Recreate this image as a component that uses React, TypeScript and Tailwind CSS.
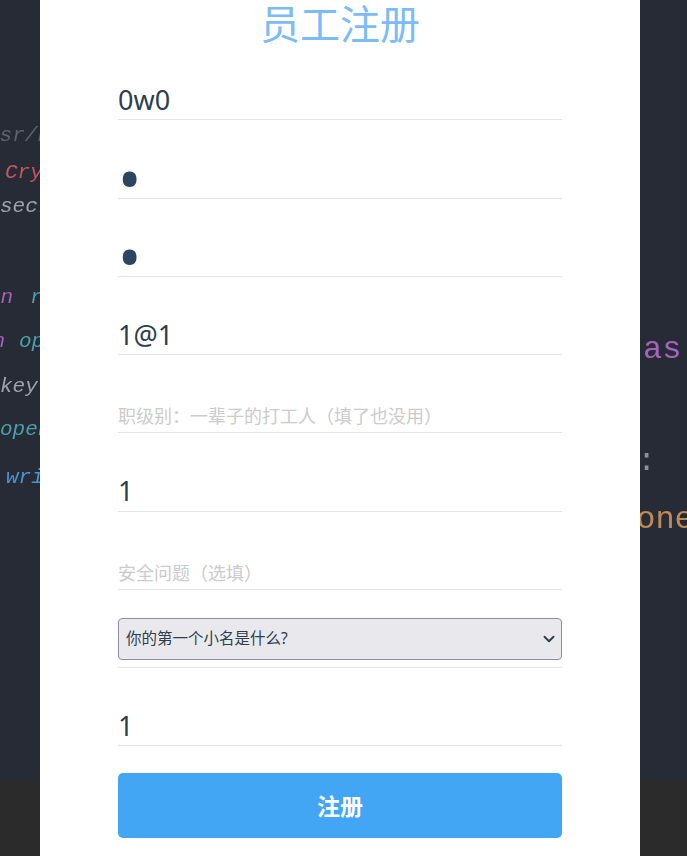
import React from "react";
import { ChevronDown } from "lucide-react";

// code snippets peeking out of the blurred editor backdrop
const snippets: { top: number; left: number; text: string; cls: string }[] = [
  { top: 125, left: -13, text: "usr/bin/env python3", cls: "italic text-[#5d626d]" },
  { top: 162, left: 5, text: "Crypto.Cipher import AES", cls: "italic text-[#c2585f]" },
  { top: 196, left: 0, text: "secret_key = ", cls: "italic text-[#9ea3ab]" },
  { top: 287, left: -12, text: "in", cls: "italic text-[#a35fba]" },
  { top: 287, left: 30, text: "range(16):", cls: "italic text-[#4a9fa9]" },
  { top: 331, left: -20, text: "in", cls: "italic text-[#a35fba]" },
  { top: 331, left: 19, text: "open(path)", cls: "italic text-[#4a9fa9]" },
  { top: 376, left: 0, text: "key = f.read()", cls: "italic text-[#9ea3ab]" },
  { top: 419, left: 0, text: "open(out, 'wb')", cls: "italic text-[#4a9fa9]" },
  { top: 467, left: 6, text: "write(data)", cls: "italic text-[#4b93d2]" },
];

const rightSnippets: { top: number; left: number; text: string; cls: string }[] = [
  { top: 333, left: 643, text: "as", cls: "text-[#a862bd]" },
  { top: 445, left: 637, text: ":", cls: "text-[#8b9099]" },
  { top: 503, left: 617, text: "None", cls: "text-[#c08955]" },
];

function Row({ children, select }: { children: React.ReactNode; select?: boolean }) {
  return (
    <div
      className={`h-[78.25px] border-b border-[#e4e4e4] flex items-end ${select ? "pb-[7px]" : ""}`}
    >
      {children}
    </div>
  );
}

const inputCls =
  "w-full h-[38px] outline-none bg-transparent text-[27px] text-[#2c3e50] placeholder:text-[#cbcbcb] placeholder:text-[18px]";

const pwdCls = "w-full h-[38px] outline-none bg-transparent text-[62px] text-[#2c4660]";

export default function App() {
  return (
    <div
      className="relative h-[856px] overflow-hidden bg-[#272b35]"
      style={{ fontFamily: '"Noto Sans", "Noto Sans CJK SC", sans-serif' }}
    >
      {/* backdrop */}
      <div className="absolute inset-0 flex flex-col">
        <div className="h-[780px] bg-[#272b35]" />
        <div className="flex-1 bg-[#2b2b2b]" />
      </div>
      <div className="absolute inset-0 blur-[0.6px]" style={{ fontFamily: '"Liberation Mono", monospace' }}>
        {snippets.map((s, i) => (
          <div
            key={i}
            className={`absolute whitespace-nowrap text-[21px] leading-[22px] ${s.cls}`}
            style={{ top: s.top, left: s.left }}
          >
            {s.text}
          </div>
        ))}
        {rightSnippets.map((s, i) => (
          <div
            key={i}
            className={`absolute whitespace-nowrap text-[32px] leading-[34px] ${s.cls}`}
            style={{ top: s.top, left: s.left }}
          >
            {s.text}
          </div>
        ))}
      </div>

      {/* panel */}
      <div className="relative ml-[40px] w-[600px] h-full bg-white">
        <div className="w-[444px] mx-auto">
          <h1 className="h-[42px] pt-[4px] text-center text-[40px] leading-[40px] text-[#7bbcf8]">
            员工注册
          </h1>
          <form onSubmit={(e) => e.preventDefault()}>
            <Row>
              <input className={inputCls} defaultValue="0w0" />
            </Row>
            <Row>
              <input type="password" className={pwdCls} defaultValue="1" />
            </Row>
            <Row>
              <input type="password" className={pwdCls} defaultValue="1" />
            </Row>
            <Row>
              <input className={inputCls} defaultValue="1@1" />
            </Row>
            <Row>
              <input className={inputCls} placeholder="职级别：一辈子的打工人（填了也没用）" />
            </Row>
            <Row>
              <input className={inputCls} defaultValue="1" />
            </Row>
            <Row>
              <input className={inputCls} placeholder="安全问题（选填）" />
            </Row>
            <Row select>
              <div className="relative w-full">
                <select className="w-full h-[42px] appearance-none rounded-[4px] border border-[#8f8f9d] bg-[#e9e9ed] pl-[7px] text-[15.5px] text-[#2c3e50] outline-none">
                  <option>你的第一个小名是什么?</option>
                  <option>你的母校是哪一所?</option>
                  <option>你最喜欢的颜色是什么?</option>
                </select>
                <ChevronDown
                  className="pointer-events-none absolute right-[4px] top-[12px] w-[18px] h-[18px] text-[#2c3e50]"
                  strokeWidth={2.6}
                />
              </div>
            </Row>
            <Row>
              <input className={inputCls} defaultValue="1" />
            </Row>
            <button
              type="submit"
              className="mt-[27px] w-full h-[65px] rounded-[5px] bg-[#42a6f5] text-white text-[23px] font-bold"
            >
              注册
            </button>
          </form>
        </div>
      </div>
    </div>
  );
}
